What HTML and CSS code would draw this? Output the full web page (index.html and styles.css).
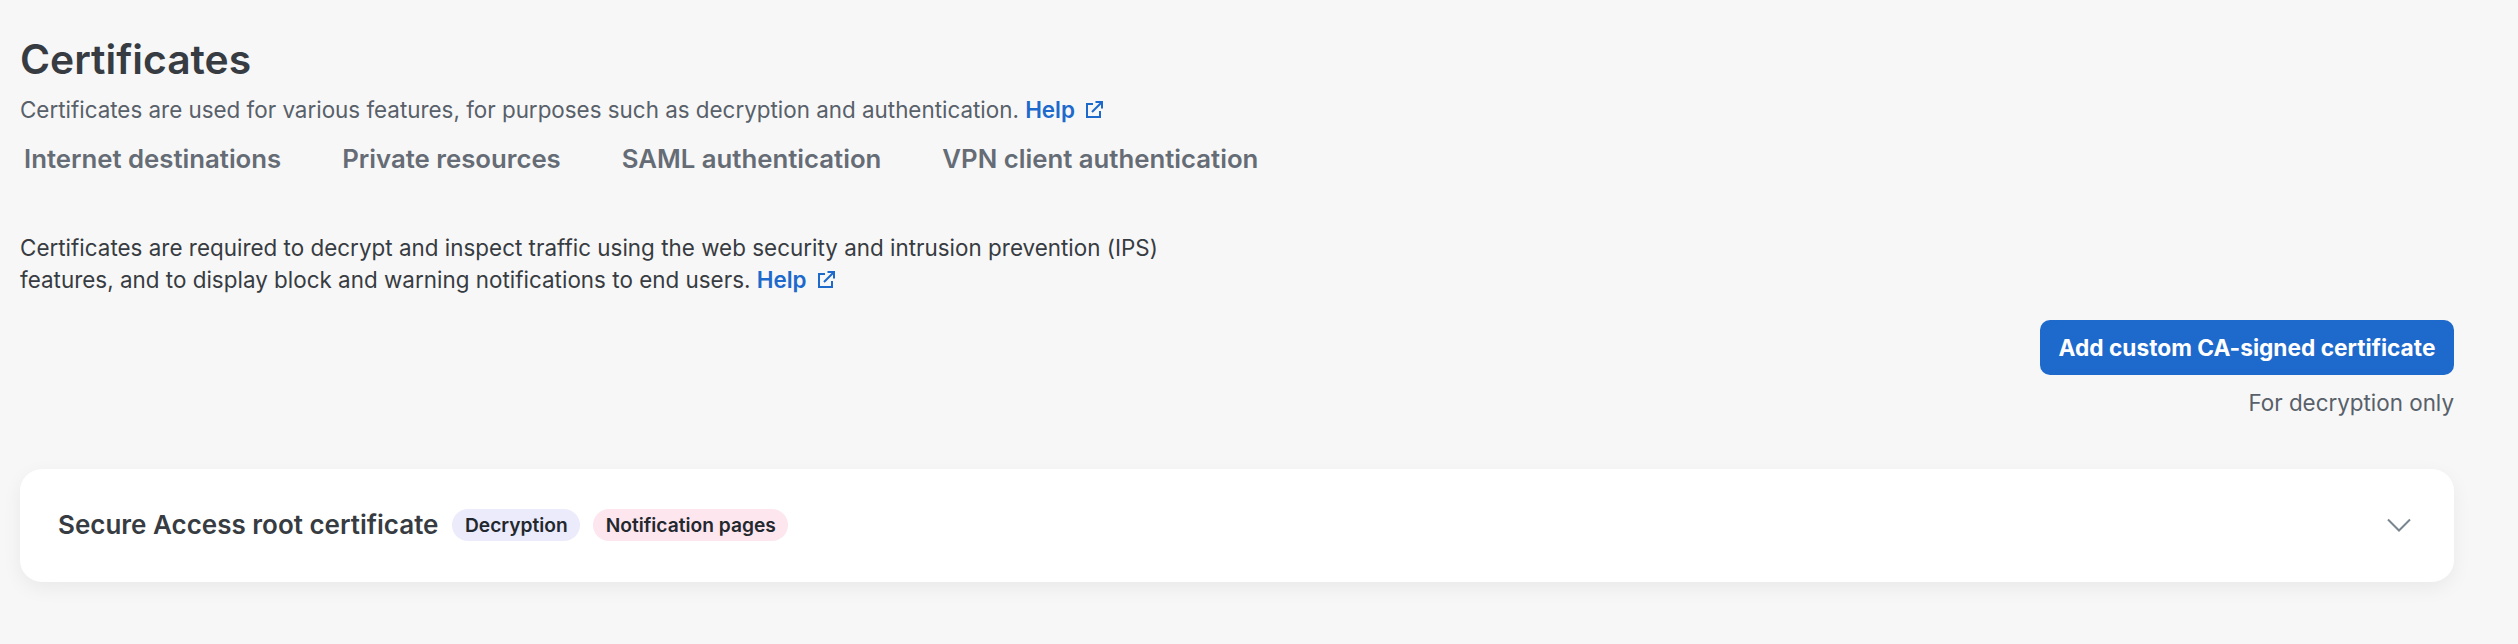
FILE: index.html
```html
<!DOCTYPE html>
<html lang="en">
<head>
<meta charset="utf-8">
<title>Certificates</title>
<link rel="stylesheet" href="styles.css">
</head>
<body>
<main class="page">
  <h1 class="title">Certificates</h1>
  <p class="subtitle">Certificates are used for various features, for purposes such as decryption and authentication. <a class="help" href="#">Help<svg class="ext" viewBox="0 0 18 18" fill="none" stroke="currentColor" stroke-width="2"><path d="M8 3H2v13h13v-6"/><path d="M7 11 16.500 1.500M10.500 1H17v6.500"/></svg></a></p>
  <nav class="tabs">
    <a class="tab" href="#">Internet destinations</a>
    <a class="tab" href="#">Private resources</a>
    <a class="tab" href="#">SAML authentication</a>
    <a class="tab" href="#">VPN client authentication</a>
  </nav>
  <p class="intro">Certificates are required to decrypt and inspect traffic using the web security and intrusion prevention (IPS) features, and to display block and warning notifications to end users. <a class="help" href="#">Help<svg class="ext" viewBox="0 0 18 18" fill="none" stroke="currentColor" stroke-width="2"><path d="M8 3H2v13h13v-6"/><path d="M7 11 16.500 1.500M10.500 1H17v6.500"/></svg></a></p>
  <div class="actions">
    <button class="primary" type="button">Add custom CA-signed certificate</button>
    <span class="note">For decryption only</span>
  </div>
  <section class="card">
    <h2 class="card-title">Secure Access root certificate</h2>
    <span class="badge badge-blue">Decryption</span>
    <span class="badge badge-pink">Notification pages</span>
    <svg class="chevron" viewBox="0 0 24 14" fill="none" stroke="currentColor" stroke-width="2"><path d="M1 1.500 12 12.500 23 1.500"/></svg>
  </section>
</main>
</body>
</html>
```
FILE: styles.css
```css
* { box-sizing: border-box; }
html, body { margin: 0; padding: 0; }
body {
  background: #f7f7f7;
  font-family: Inter, "Liberation Sans", sans-serif;
  color: #373c42;
  height: 644px;
  overflow: hidden;
}
.page { padding: 36px 64px 0 20px; }
.title {
  margin: 0;
  font-size: 40.800px;
  line-height: 46px;
  font-weight: 600;
  color: #373c42;
}
.subtitle {
  margin: 12px 0 0;
  font-size: 22.4px;
  line-height: 32px;
  color: #58606a;
}
.help {
  color: #1d69cc;
  font-weight: 600;
  text-decoration: none;
  white-space: nowrap;
}
.ext {
  width: 18px;
  height: 18px;
  margin-left: 10px;
  vertical-align: -1px;
}
.tabs {
  display: flex;
  gap: 61px;
  padding: 0 4px;
  margin-top: 13px;
}
.tab {
  font-size: 25.76px;
  line-height: 40px;
  font-weight: 600;
  color: #656c75;
  text-decoration: none;
}
.intro {
  width: 1200px;
  margin: 53px 0 0;
  font-size: 22.4px;
  line-height: 32px;
  letter-spacing: 0.02px;
  color: #373c42;
}
.actions {
  display: flex;
  flex-direction: column;
  align-items: flex-end;
  margin-top: 24px;
}
.primary {
  width: 414px;
  height: 55px;
  border: 0;
  border-radius: 10px;
  background: #1d69cc;
  color: #fff;
  font: 700 22.7px Inter, "Liberation Sans", sans-serif;
}
.note {
  margin-top: 12px;
  font-size: 22.4px;
  line-height: 32px;
  color: #58606a;
}
.card {
  display: flex;
  align-items: center;
  height: 113px;
  margin-top: 50px;
  padding: 0 43px 2px 38px;
  background: #fff;
  border-radius: 22px;
  box-shadow: 0 6px 20px rgba(0, 0, 0, 0.06);
}
.card-title {
  margin: 0 14px 0 0;
  font-size: 26px;
  font-weight: 600;
  color: #373c42;
}
.badge {
  height: 32px;
  padding: 0 12.500px;
  margin-right: 13px;
  border-radius: 16px;
  font-size: 19.2px;
  line-height: 32px;
  font-weight: 600;
  color: #23282e;
}
.badge-blue { background: #ebebfc; }
.badge-pink { background: #fde6ee; }
.chevron {
  width: 24px;
  height: 14px;
  margin-left: auto;
  color: #79858f;
}
```
